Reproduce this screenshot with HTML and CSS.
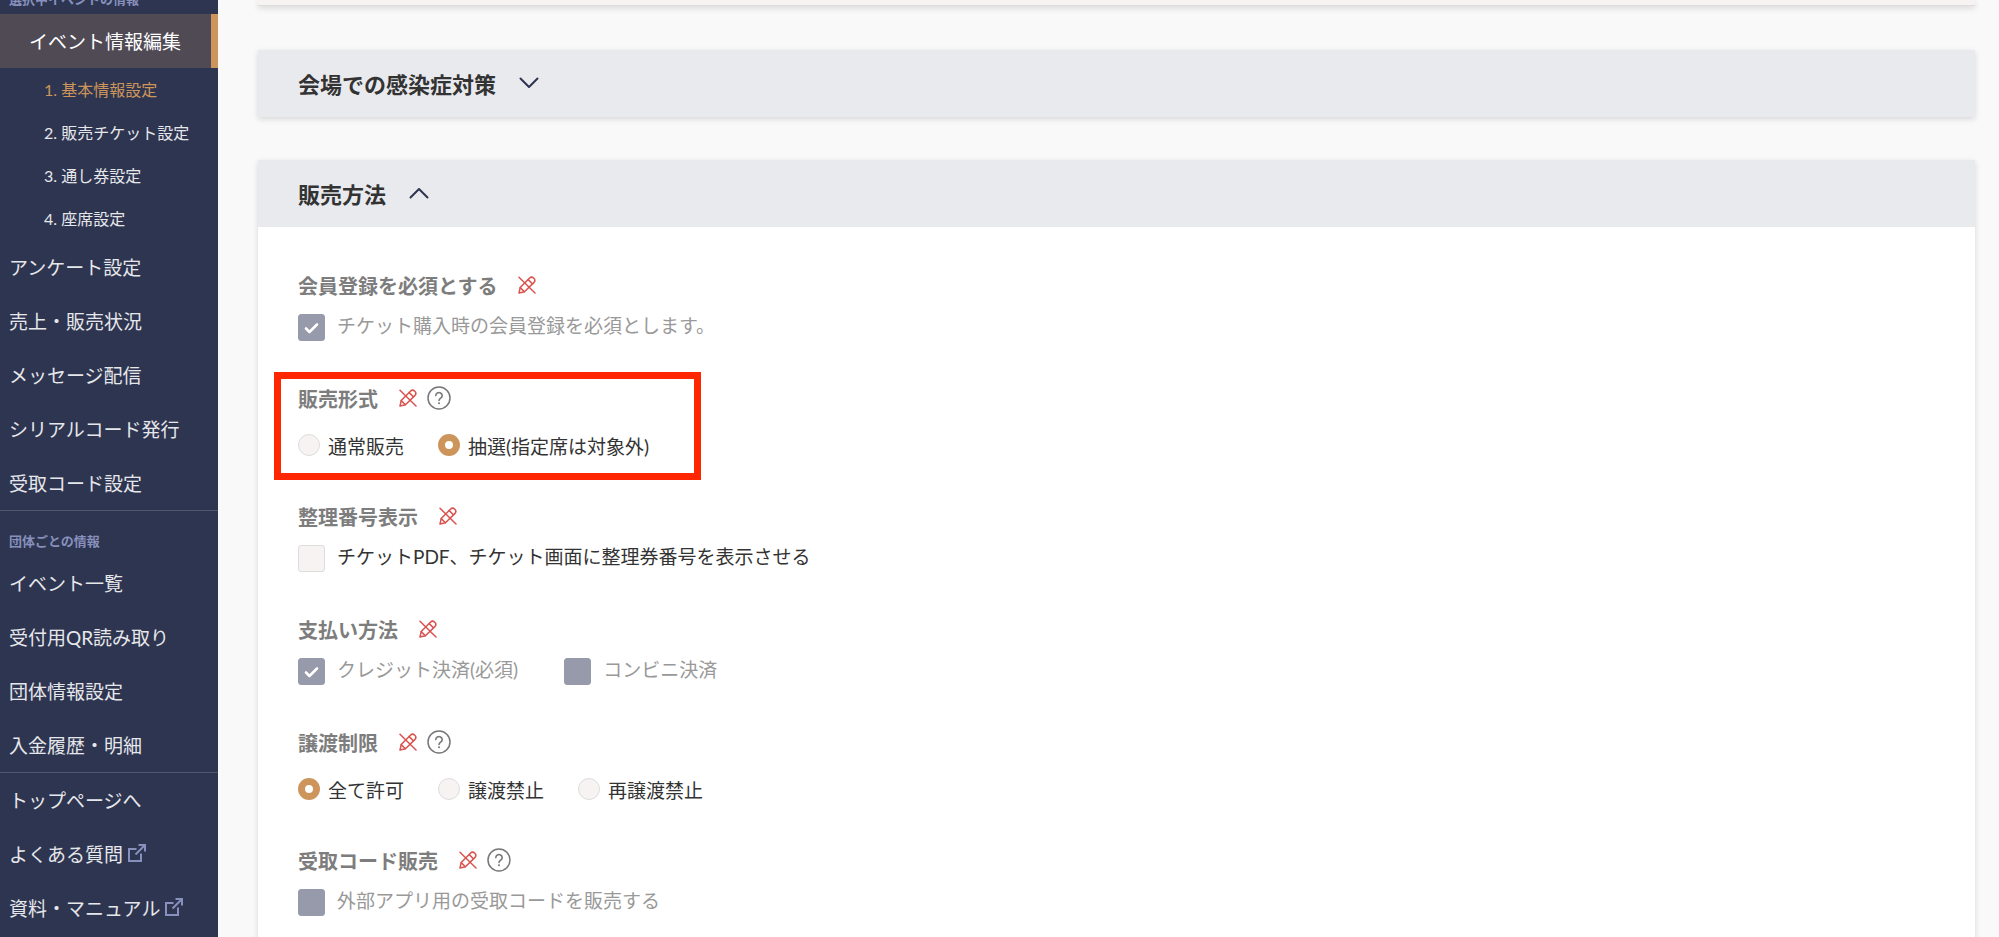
FILE: index.html
```html
<!DOCTYPE html>
<html lang="ja">
<head>
    <meta charset="UTF-8">
    <meta name="viewport" content="width=device-width, initial-scale=1.0">
    <title>イベント情報編集</title>
    <link rel="stylesheet" href="styles.css">
</head>
<body>
    <!-- shared icons -->
    <svg class="icon-defs" aria-hidden="true">
        <symbol id="icon-no-edit" viewBox="0 0 18 18">
            <g fill="none" stroke="currentColor" stroke-width="1.5" stroke-linecap="round" stroke-linejoin="round">
                <path d="M1 17l1.2-5.4L11.4 2.2a3 3 0 0 1 4.4 4.4L6.4 15.8z"/>
                <path d="M2.2 11.6l4.2 4.2M10.2 3.6l4.2 4.2"/>
                <path d="M1 1.2L17 17"/>
            </g>
        </symbol>
        <symbol id="icon-external" viewBox="0 0 18 18">
            <g fill="none" stroke="currentColor" stroke-width="2">
                <path d="M8.5 5H1v12h12V9.5"/>
                <path d="M10.5 1H17v6.5M17 1L7.5 10.5"/>
            </g>
        </symbol>
        <symbol id="icon-chevron" viewBox="0 0 20 12">
            <path d="M1.5 1.5L10 10l8.5-8.5" fill="none" stroke="currentColor" stroke-width="2" stroke-linecap="round" stroke-linejoin="round"/>
        </symbol>
        <symbol id="icon-help" viewBox="0 0 24 24">
            <circle cx="12" cy="12" r="11" fill="none" stroke="currentColor" stroke-width="1.5"/>
            <path d="M8.8 9.6a3.2 3 0 1 1 4.9 2.5c-1.1.8-1.7 1.2-1.7 2.4" fill="none" stroke="currentColor" stroke-width="1.6" stroke-linecap="round"/>
            <circle cx="12" cy="17.2" r="1" fill="currentColor"/>
        </symbol>
    </svg>

    <div class="layout">
        <nav class="sidebar">
            <div class="nav-group">
                <p class="nav-label">選択中イベントの情報</p>
                <a class="nav-item active" href="#">イベント情報編集</a>
                <a class="nav-sub current" href="#">1. 基本情報設定</a>
                <a class="nav-sub" href="#">2. 販売チケット設定</a>
                <a class="nav-sub" href="#">3. 通し券設定</a>
                <a class="nav-sub" href="#">4. 座席設定</a>
                <a class="nav-item" href="#">アンケート設定</a>
                <a class="nav-item" href="#">売上・販売状況</a>
                <a class="nav-item" href="#">メッセージ配信</a>
                <a class="nav-item" href="#">シリアルコード発行</a>
                <a class="nav-item" href="#">受取コード設定</a>
            </div>
            <div class="nav-group">
                <p class="nav-label">団体ごとの情報</p>
                <a class="nav-item" href="#">イベント一覧</a>
                <a class="nav-item" href="#">受付用QR読み取り</a>
                <a class="nav-item" href="#">団体情報設定</a>
                <a class="nav-item" href="#">入金履歴・明細</a>
            </div>
            <div class="nav-group">
                <a class="nav-item" href="#">トップページへ</a>
                <a class="nav-item" href="#">よくある質問<svg class="icon-external"><use href="#icon-external"/></svg></a>
                <a class="nav-item" href="#">資料・マニュアル<svg class="icon-external"><use href="#icon-external"/></svg></a>
            </div>
        </nav>

        <main class="content">
            <div class="card card-end"></div>

            <details class="card">
                <summary class="card-header">
                    <h2>会場での感染症対策</h2>
                    <svg class="chevron"><use href="#icon-chevron"/></svg>
                </summary>
            </details>

            <details class="card" open>
                <summary class="card-header">
                    <h2>販売方法</h2>
                    <svg class="chevron"><use href="#icon-chevron"/></svg>
                </summary>
                <div class="card-body">
                    <section class="field">
                        <div class="field-title">
                            <h3>会員登録を必須とする</h3>
                            <svg class="icon-no-edit"><use href="#icon-no-edit"/></svg>
                        </div>
                        <div class="checks">
                            <label class="check"><input type="checkbox" checked disabled><span>チケット購入時の会員登録を必須とします。</span></label>
                        </div>
                    </section>

                    <section class="field highlight">
                        <div class="field-title">
                            <h3>販売形式</h3>
                            <svg class="icon-no-edit"><use href="#icon-no-edit"/></svg>
                            <button class="help" type="button" aria-label="販売形式のヘルプ"><svg><use href="#icon-help"/></svg></button>
                        </div>
                        <div class="radios">
                            <label class="radio"><input type="radio" name="sale_type"><span>通常販売</span></label>
                            <label class="radio"><input type="radio" name="sale_type" checked><span>抽選(指定席は対象外)</span></label>
                        </div>
                    </section>

                    <section class="field">
                        <div class="field-title">
                            <h3>整理番号表示</h3>
                            <svg class="icon-no-edit"><use href="#icon-no-edit"/></svg>
                        </div>
                        <div class="checks">
                            <label class="check"><input type="checkbox"><span>チケットPDF、チケット画面に整理券番号を表示させる</span></label>
                        </div>
                    </section>

                    <section class="field">
                        <div class="field-title">
                            <h3>支払い方法</h3>
                            <svg class="icon-no-edit"><use href="#icon-no-edit"/></svg>
                        </div>
                        <div class="checks">
                            <label class="check"><input type="checkbox" checked disabled><span>クレジット決済(必須)</span></label>
                            <label class="check"><input type="checkbox" disabled><span>コンビニ決済</span></label>
                        </div>
                    </section>

                    <section class="field">
                        <div class="field-title">
                            <h3>譲渡制限</h3>
                            <svg class="icon-no-edit"><use href="#icon-no-edit"/></svg>
                            <button class="help" type="button" aria-label="譲渡制限のヘルプ"><svg><use href="#icon-help"/></svg></button>
                        </div>
                        <div class="radios">
                            <label class="radio"><input type="radio" name="transfer" checked><span>全て許可</span></label>
                            <label class="radio"><input type="radio" name="transfer"><span>譲渡禁止</span></label>
                            <label class="radio"><input type="radio" name="transfer"><span>再譲渡禁止</span></label>
                        </div>
                    </section>

                    <section class="field">
                        <div class="field-title">
                            <h3>受取コード販売</h3>
                            <svg class="icon-no-edit"><use href="#icon-no-edit"/></svg>
                            <button class="help" type="button" aria-label="受取コード販売のヘルプ"><svg><use href="#icon-help"/></svg></button>
                        </div>
                        <div class="checks">
                            <label class="check"><input type="checkbox" disabled><span>外部アプリ用の受取コードを販売する</span></label>
                        </div>
                    </section>
                </div>
            </details>
        </main>
    </div>
</body>
</html>
```
FILE: styles.css
```css
* {
    box-sizing: border-box;
}

body {
    margin: 0;
    font-family: Lato, "Noto Sans CJK JP", sans-serif;
    font-size: 19px;
    color: #333;
    background-color: #f9f9f9;
}

h2, h3, p {
    margin: 0;
}

.icon-defs {
    display: none;
}

.layout {
    display: flex;
    height: 100vh;
    overflow: hidden;
}

/* Sidebar */
.sidebar {
    flex: none;
    width: 218px;
    height: 100%;
    overflow: hidden;
    background-color: #2e3550;
}

/* the menu is scrolled a little past its first label */
.nav-group:first-child {
    margin-top: -31px;
}

.nav-group + .nav-group {
    border-top: 1px solid #50566c;
}

.nav-label {
    padding: 20px 9px 5px;
    font-size: 13px;
    font-weight: bold;
    line-height: 20px;
    color: #8890bd;
}

.nav-item {
    display: flex;
    align-items: center;
    gap: 5px;
    height: 54px;
    padding: 0 9px 2px;
    color: #e6e7eb;
    text-decoration: none;
    white-space: nowrap;
}

.nav-item.active {
    padding-left: 29px;
    color: #fff;
    background-color: #504a55;
    border-right: 7px solid #cd955b;
}

.nav-sub {
    display: block;
    padding-left: 44px;
    font-size: 16px;
    line-height: 43px;
    color: #e6e7eb;
    text-decoration: none;
}

.nav-sub.current {
    color: #cd955b;
}

.icon-external {
    width: 18px;
    height: 18px;
    color: #8890bd;
}

/* Cards */
.content {
    flex: 1;
    padding: 0 24px 0 40px;
    overflow: hidden;
}

.card {
    margin-bottom: 43px;
    background-color: #fff;
    box-shadow: 0 2px 6px rgba(0, 0, 0, 0.14);
}

.card-end {
    height: 6px;
    margin-bottom: 44px;
    background-color: #f7f3f3;
    border-bottom: 1px solid #ddd;
}

.card-header {
    display: flex;
    align-items: center;
    gap: 23px;
    height: 67px;
    padding: 0 40px 2px;
    background-color: #e9eaee;
    cursor: pointer;
}

.card-header h2 {
    font-size: 22px;
    font-weight: bold;
}

.chevron {
    width: 20px;
    height: 12px;
    color: #2e3550;
}

.card[open] .chevron {
    transform: rotate(180deg);
}

.card-body {
    padding: 44px 40px 1px;
}

/* Fields */
.field {
    margin-bottom: 43px;
}

.field-title {
    display: flex;
    align-items: center;
    height: 28px;
}

.field-title h3 {
    font-size: 20px;
    font-weight: bold;
    color: #7d7d7d;
}

.icon-no-edit {
    width: 18px;
    height: 18px;
    margin-left: 21px;
    color: #d9534f;
}

.help {
    width: 24px;
    height: 24px;
    margin-left: 10px;
    padding: 0;
    color: #777;
    background: none;
    border: none;
    cursor: pointer;
}

.help svg {
    display: block;
    width: 24px;
    height: 24px;
}

.checks {
    display: flex;
    gap: 46px;
    margin-top: 15px;
}

.check {
    display: flex;
    gap: 12px;
    height: 27px;
    line-height: 24px;
}

.check input {
    flex: none;
    appearance: none;
    width: 27px;
    height: 27px;
    margin: 0;
    background: #f7f3f3 center / 15px 12px no-repeat;
    border: 1px solid #ddd;
    border-radius: 3px;
}

.check input:disabled {
    background-color: #979aaa;
    border-color: #979aaa;
}

.check input:disabled + span {
    color: #999;
}

.check input:checked {
    background-image: url("data:image/svg+xml,%3Csvg xmlns='http://www.w3.org/2000/svg' viewBox='0 0 15 12'%3E%3Cpath d='M2 6.5l3.5 3.5L13 2.5' fill='none' stroke='white' stroke-width='2.6' stroke-linecap='round' stroke-linejoin='round'/%3E%3C/svg%3E");
}

.radios {
    display: flex;
    gap: 34px;
    margin-top: 19px;
}

.radio {
    display: flex;
    align-items: center;
    gap: 8px;
    height: 28px;
}

.radio input {
    appearance: none;
    width: 22px;
    height: 22px;
    margin: 0;
    background-color: #f7f3f3;
    border: 1px solid #ddd;
    border-radius: 50%;
}

.radio input:checked {
    background-color: #fff;
    border: 7px solid #cd955b;
}

/* Red frame round the setting being explained */
.highlight {
    position: relative;
}

.highlight::after {
    content: "";
    position: absolute;
    top: -12px;
    left: -24px;
    box-sizing: border-box;
    width: 427px;
    height: 108px;
    border: 7px solid #ff2600;
    pointer-events: none;
}
```
